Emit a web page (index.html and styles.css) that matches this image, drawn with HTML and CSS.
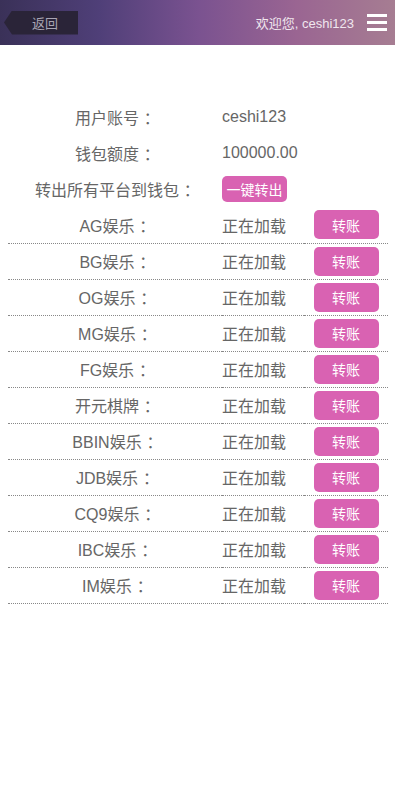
FILE: index.html
```html
<!DOCTYPE html>
<html lang="zh">
<head>
<meta charset="utf-8">
<title>转账</title>
<link rel="stylesheet" href="styles.css">
</head>
<body>
<header class="topbar">
  <a class="back">返回</a>
  <div class="right">
    <span class="welcome">欢迎您, ceshi123</span>
    <span class="menu"><i></i><i></i><i></i></span>
  </div>
</header>
<table class="info">
  <tr><td class="lbl">用户账号<span class="c">：</span></td><td class="val" colspan="2">ceshi123</td></tr>
  <tr><td class="lbl">钱包额度<span class="c">：</span></td><td class="val" colspan="2">100000.00</td></tr>
  <tr><td class="lbl">转出所有平台到钱包<span class="c">：</span></td><td class="val" colspan="2"><button class="btn small">一键转出</button></td></tr>
  <tr class="plat"><td class="lbl">AG娱乐<span class="c">：</span></td><td class="val">正在加载</td><td class="act"><button class="btn">转账</button></td></tr>
  <tr class="plat"><td class="lbl">BG娱乐<span class="c">：</span></td><td class="val">正在加载</td><td class="act"><button class="btn">转账</button></td></tr>
  <tr class="plat"><td class="lbl">OG娱乐<span class="c">：</span></td><td class="val">正在加载</td><td class="act"><button class="btn">转账</button></td></tr>
  <tr class="plat"><td class="lbl">MG娱乐<span class="c">：</span></td><td class="val">正在加载</td><td class="act"><button class="btn">转账</button></td></tr>
  <tr class="plat"><td class="lbl">FG娱乐<span class="c">：</span></td><td class="val">正在加载</td><td class="act"><button class="btn">转账</button></td></tr>
  <tr class="plat"><td class="lbl">开元棋牌<span class="c">：</span></td><td class="val">正在加载</td><td class="act"><button class="btn">转账</button></td></tr>
  <tr class="plat"><td class="lbl">BBIN娱乐<span class="c">：</span></td><td class="val">正在加载</td><td class="act"><button class="btn">转账</button></td></tr>
  <tr class="plat"><td class="lbl">JDB娱乐<span class="c">：</span></td><td class="val">正在加载</td><td class="act"><button class="btn">转账</button></td></tr>
  <tr class="plat"><td class="lbl">CQ9娱乐<span class="c">：</span></td><td class="val">正在加载</td><td class="act"><button class="btn">转账</button></td></tr>
  <tr class="plat"><td class="lbl">IBC娱乐<span class="c">：</span></td><td class="val">正在加载</td><td class="act"><button class="btn">转账</button></td></tr>
  <tr class="plat"><td class="lbl">IM娱乐<span class="c">：</span></td><td class="val">正在加载</td><td class="act"><button class="btn">转账</button></td></tr>
</table>
</body>
</html>
```
FILE: styles.css
```css
html, body {
  margin: 0;
  padding: 0;
  background: #fff;
  font-family: "Liberation Sans", "Noto Sans CJK SC", sans-serif;
}
.topbar {
  height: 45px;
  box-sizing: border-box;
  display: flex;
  align-items: center;
  justify-content: space-between;
  padding: 0 8px 0 4px;
  background: linear-gradient(90deg, #3a3158 0%, #4f3f78 25%, #7a5290 50%, #9a6592 75%, #a67d92 100%);
}
.back {
  width: 74px;
  height: 24px;
  box-sizing: border-box;
  padding-left: 28px;
  display: flex;
  align-items: center;
  font-size: 13px;
  color: #a9a6b4;
  background: #2a2438;
  clip-path: polygon(8px 0, 100% 0, 100% 100%, 8px 100%, 0 50%);
}
.right {
  display: flex;
  align-items: center;
  gap: 13px;
}
.welcome {
  color: #f0e6ee;
  font-size: 13px;
}
.menu {
  display: flex;
  flex-direction: column;
  gap: 4px;
  width: 20px;
}
.menu i {
  display: block;
  height: 3px;
  background: #fff;
}
.info {
  margin: 54px 7px 0 8px;
  width: 380px;
  border-collapse: collapse;
  font-size: 16px;
  color: #666;
}
.info td {
  height: 36px;
  padding: 0;
  box-sizing: border-box;
}
.lbl {
  width: 214px;
  text-align: center;
}
.c {
  padding-left: 0.3em;
  margin-right: -0.3em;
}
.val {
  width: 82px;
  text-align: left;
}
.act {
  text-align: center;
}
.plat td {
  border-bottom: 1px dotted #888;
}
.btn {
  width: 65px;
  height: 29px;
  border: none;
  border-radius: 5px;
  background: #d962b2;
  color: #fff;
  font-family: inherit;
  font-size: 14px;
  padding: 0;
  vertical-align: middle;
}
.btn.small {
  height: 26px;
  border-radius: 5px;
}
```
